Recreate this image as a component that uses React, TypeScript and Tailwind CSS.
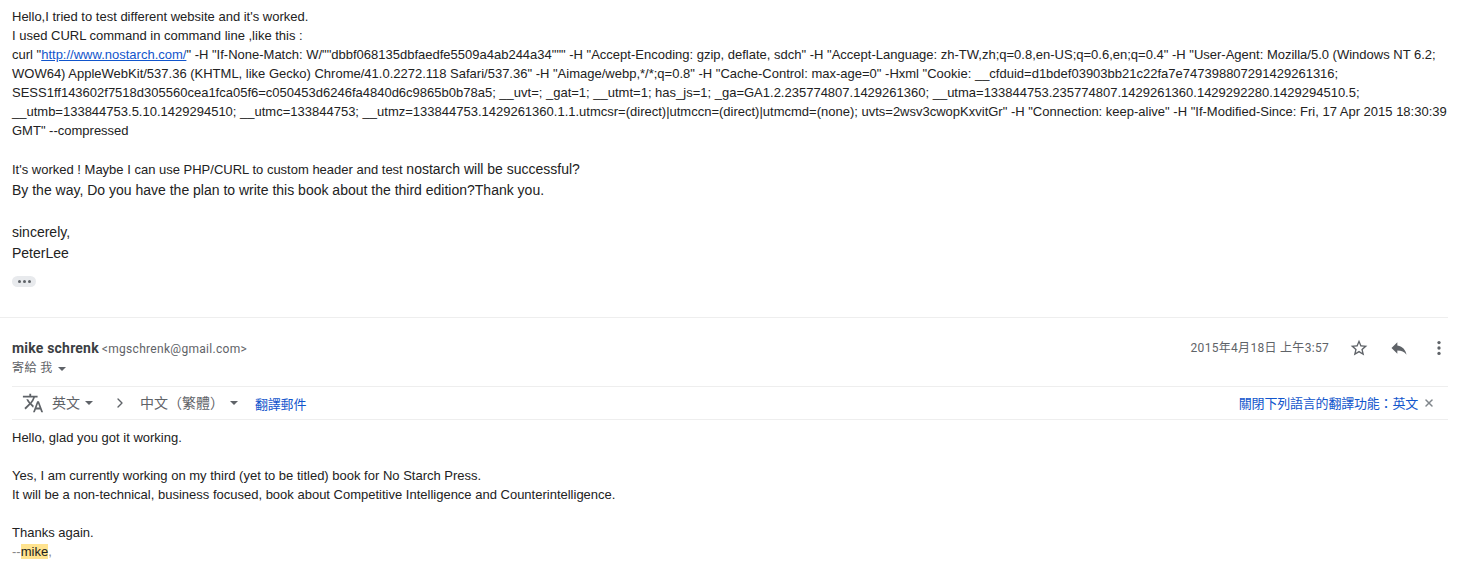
import { ChevronRight, X } from "lucide-react";

const cjk = "font-['Roboto','Noto_Sans_CJK_TC',sans-serif]";

function Caret({ className }: { className?: string }) {
    return (
        <svg width="8" height="4" viewBox="0 0 10 5" className={className}>
            <path d="M0 0l5 5 5-5z" fill="#5f6368" />
        </svg>
    );
}

function TranslateIcon() {
    return (
        <svg width="22" height="22" viewBox="0 0 24 24" fill="#5f6368">
            <path d="M12.87 15.07l-2.54-2.51.03-.03A17.52 17.52 0 0 0 14.07 6H17V4h-7V2H8v2H1v2h11.17C11.5 7.92 10.44 9.75 9 11.35 8.07 10.32 7.3 9.19 6.69 8h-2c.73 1.63 1.73 3.17 2.98 4.56l-5.09 5.02L4 19l5-5 3.11 3.11.76-2.04zM18.5 10h-2L12 22h2l1.12-3h4.75L21 22h2l-4.5-12zm-2.62 7l1.62-4.33L19.12 17h-3.24z" />
        </svg>
    );
}

function StarIcon() {
    return (
        <svg width="20" height="20" viewBox="0 0 24 24" fill="#5f6368" className="ml-[20px]">
            <path d="M22 9.24l-7.19-.62L12 2 9.19 8.63 2 9.24l5.46 4.73L5.82 21 12 17.27 18.18 21l-1.63-7.03L22 9.24zM12 15.4l-3.76 2.27 1-4.28-3.32-2.88 4.38-.38L12 6.1l1.71 4.04 4.38.38-3.32 2.88 1 4.28L12 15.4z" />
        </svg>
    );
}

function ReplyIcon() {
    return (
        <svg width="20" height="20" viewBox="0 0 24 24" fill="#5f6368" className="ml-[20px]">
            <path d="M10 9V5l-7 7 7 7v-4.1c5 0 8.5 1.6 11 5.1-1-5-4-10-11-11z" />
        </svg>
    );
}

function MoreIcon() {
    return (
        <svg width="20" height="20" viewBox="0 0 24 24" fill="#5f6368" className="ml-[20px]">
            <circle cx="12" cy="5.5" r="2" />
            <circle cx="12" cy="12" r="2" />
            <circle cx="12" cy="18.5" r="2" />
        </svg>
    );
}

function App() {
    return (
        <div className="h-[568px] w-[1465px] overflow-hidden bg-white">
            <div className="w-[1448px]">
                {/* Quoted message */}
                <div className="pl-3 pt-[7px] font-['Liberation_Sans',sans-serif] text-[13px] leading-[19px] text-[#222222]">
                    <div>Hello,I tried to test different website and it's worked.</div>
                    <div>I used CURL command in command line ,like this :</div>
                    <div>
                        curl "<a className="text-[#1155cc] underline">http://www.nostarch.com/</a>" -H "If-None-Match: W/""dbbf068135dbfaedfe5509a4ab244a34""" -H "Accept-Encoding: gzip, deflate, sdch" -H "Accept-Language: zh-TW,zh;q=0.8,en-US;q=0.6,en;q=0.4" -H "User-Agent: Mozilla/5.0 (Windows NT 6.2; WOW64) AppleWebKit/537.36 (KHTML, like Gecko) Chrome/41.0.2272.118 Safari/537.36" -H "Aimage/webp,*/*;q=0.8" -H "Cache-Control: max-age=0" -Hxml "Cookie: __cfduid=d1bdef03903bb21c22fa7e747398807291429261316; SESS1ff143602f7518d305560cea1fca05f6=c050453d6246fa4840d6c9865b0b78a5; __uvt=; _gat=1; __utmt=1; has_js=1; _ga=GA1.2.235774807.1429261360; __utma=133844753.235774807.1429261360.1429292280.1429294510.5; __utmb=133844753.5.10.1429294510; __utmc=133844753; __utmz=133844753.1429261360.1.1.utmcsr=(direct)|utmccn=(direct)|utmcmd=(none); uvts=2wsv3cwopKxvitGr" -H "Connection: keep-alive" -H "If-Modified-Since: Fri, 17 Apr 2015 18:30:39 GMT" --compressed
                    </div>
                    <div className="h-[19px]" />
                    <div className="h-[21px] leading-[21px]">
                        It's worked ! Maybe I can use PHP/CURL to custom header and test <span className="text-[14px]">nostarch will be successful?</span>
                    </div>
                    <div className="text-[14px] leading-[21px]">By the way, Do you have the plan to write this book about the third edition?Thank you.</div>
                    <div className="h-[21px]" />
                    <div className="text-[14px] leading-[21px]">sincerely,</div>
                    <div className="text-[14px] leading-[21px]">PeterLee</div>
                    <div className="mt-[12px] flex h-[11px] w-[24px] items-center justify-center gap-[2px] rounded-[6px] bg-[#e8eaed]">
                        <span className="size-[3px] rounded-full bg-[#5f6368]" />
                        <span className="size-[3px] rounded-full bg-[#5f6368]" />
                        <span className="size-[3px] rounded-full bg-[#5f6368]" />
                    </div>
                </div>

                <div className="mt-[30px] border-t border-[#eeeeee]" />

                {/* Reply header */}
                <div className={`flex justify-between pl-3 pt-[20px] ${cjk}`}>
                    <div>
                        <div className="flex items-baseline gap-[3px] leading-[20px]">
                            <span className="text-[14px] font-bold tracking-[0.2px] text-[#3c4043]">mike schrenk</span>
                            <span className="text-[12px] tracking-[0.3px] text-[#5f6368]">&lt;mgschrenk@gmail.com&gt;</span>
                        </div>
                        <div className="flex h-[19px] items-center pb-[2px] text-[12px] tracking-[0.4px] text-[#5f6368]">
                            寄給 我 <Caret className="ml-[5px] mt-[2px]" />
                        </div>
                    </div>
                    <div className="-mr-px flex h-[20px] items-center text-[#5f6368]">
                        <span className="text-[12px] tracking-[0.3px]">2015年4月18日 上午3:57</span>
                        <StarIcon />
                        <ReplyIcon />
                        <MoreIcon />
                    </div>
                </div>

                {/* Translate bar */}
                <div className={`mt-[8px] ml-3 flex h-[34px] items-center justify-between border-y border-[#eeeeee] text-[14px] text-[#5f6368] ${cjk}`}>
                    <div className="flex items-center pl-[10px]">
                        <TranslateIcon />
                        <span className="ml-[8px]">英文</span>
                        <Caret className="ml-[5px]" />
                        <ChevronRight size={16} strokeWidth={2} className="ml-[19px]" />
                        <span className="ml-[12px]">中文（繁體）</span>
                        <Caret className="ml-[6px]" />
                        <span className="ml-[17px] mt-[4px] text-[13px] tracking-[-0.2px] text-[#1155cc]">翻譯郵件</span>
                    </div>
                    <div className="flex items-center">
                        <span className="mt-[2px] text-[13px] tracking-[-0.2px] text-[#1155cc]">關閉下列語言的翻譯功能：英文</span>
                        <X size={12} strokeWidth={3} className="ml-[5px] mr-[13px] text-[#80868b]" />
                    </div>
                </div>

                {/* Reply body */}
                <div className="pl-3 pt-[8px] font-['Liberation_Sans',sans-serif] text-[13px] leading-[19px] text-[#222222]">
                    <div>Hello, glad you got it working.</div>
                    <div className="h-[19px]" />
                    <div>Yes, I am currently working on my third (yet to be titled) book for No Starch Press.</div>
                    <div>It will be a non-technical, business focused, book about Competitive Intelligence and Counterintelligence.</div>
                    <div className="h-[19px]" />
                    <div>Thanks again.</div>
                    <div>
                        <span className="text-[#888888]">--</span><span className="bg-[#ffe38f]">mike</span><span className="text-[#888888]">,</span>
                    </div>
                </div>
            </div>
        </div>
    );
}

export default App;
